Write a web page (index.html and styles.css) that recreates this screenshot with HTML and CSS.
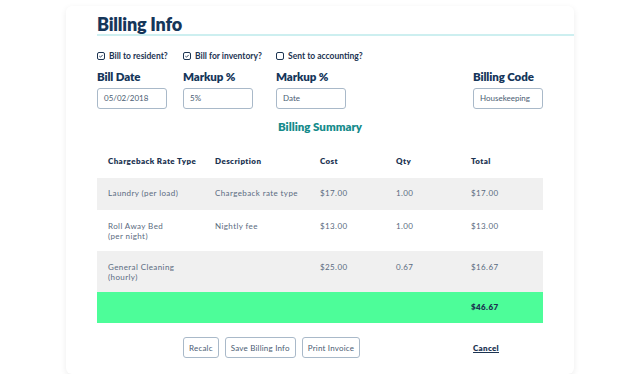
FILE: index.html
```html
<!DOCTYPE html>
<html lang="en">
<head>
    <meta charset="UTF-8">
    <title>Billing Info</title>
    <link rel="stylesheet" href="styles.css">
</head>
<body>
    <div class="card">
        <h1 class="title">Billing Info</h1>

        <div class="checks">
            <label class="check">
                <svg width="8" height="8" viewBox="0 0 8 8"><rect x="0.5" y="0.5" width="7" height="7" rx="1.5" fill="none" stroke="#1c3452"/><path d="M2.3 4.1 L3.5 5.2 L5.7 2.9" fill="none" stroke="#1c3452" stroke-width="0.9"/></svg>
                Bill to resident?
            </label>
            <label class="check">
                <svg width="8" height="8" viewBox="0 0 8 8"><rect x="0.5" y="0.5" width="7" height="7" rx="1.5" fill="none" stroke="#1c3452"/><path d="M2.3 4.1 L3.5 5.2 L5.7 2.9" fill="none" stroke="#1c3452" stroke-width="0.9"/></svg>
                Bill for inventory?
            </label>
            <label class="check">
                <svg width="8" height="8" viewBox="0 0 8 8"><rect x="0.5" y="0.5" width="7" height="7" rx="1.5" fill="none" stroke="#1c3452"/></svg>
                Sent to accounting?
            </label>
        </div>

        <div class="fields">
            <div class="field">
                <div class="field-label">Bill Date</div>
                <div class="input">05/02/2018</div>
            </div>
            <div class="field">
                <div class="field-label">Markup %</div>
                <div class="input">5%</div>
            </div>
            <div class="field">
                <div class="field-label">Markup %</div>
                <div class="input">Date</div>
            </div>
            <div class="field">
                <div class="field-label">Billing Code</div>
                <div class="input">Housekeeping</div>
            </div>
        </div>

        <h2 class="summary-title">Billing Summary</h2>

        <table class="summary">
            <colgroup>
                <col style="width:107px">
                <col style="width:105px">
                <col style="width:76px">
                <col style="width:75px">
                <col>
            </colgroup>
            <thead>
                <tr>
                    <th>Chargeback Rate Type</th>
                    <th>Description</th>
                    <th>Cost</th>
                    <th>Qty</th>
                    <th>Total</th>
                </tr>
            </thead>
            <tbody>
                <tr class="shade single">
                    <td>Laundry (per load)</td>
                    <td>Chargeback rate type</td>
                    <td>$17.00</td>
                    <td>1.00</td>
                    <td>$17.00</td>
                </tr>
                <tr>
                    <td>Roll Away Bed<br>(per night)</td>
                    <td>Nightly fee</td>
                    <td>$13.00</td>
                    <td>1.00</td>
                    <td>$13.00</td>
                </tr>
                <tr class="shade">
                    <td>General Cleaning<br>(hourly)</td>
                    <td></td>
                    <td>$25.00</td>
                    <td>0.67</td>
                    <td>$16.67</td>
                </tr>
                <tr class="grand">
                    <td></td>
                    <td></td>
                    <td></td>
                    <td></td>
                    <td>$46.67</td>
                </tr>
            </tbody>
        </table>

        <div class="actions">
            <button class="btn">Recalc</button>
            <button class="btn">Save Billing Info</button>
            <button class="btn">Print Invoice</button>
            <a href="#" class="cancel">Cancel</a>
        </div>
    </div>
</body>
</html>
```

FILE: styles.css
```css
body {
    margin: 0;
    background: #ffffff;
    font-family: Lato, "Noto Sans", sans-serif;
    color: #5a6b80;
}

.card {
    margin: 6px 0 0 66px;
    width: 508px;
    height: 368px;
    box-sizing: border-box;
    padding: 8px 31px 0 31px;
    background: #fff;
    border-radius: 6px;
    box-shadow: 0 2px 6px rgba(0,0,0,0.08);
}

.title {
    margin: 0 -31px 0 0;
    font-size: 18px;
    font-weight: 800;
    letter-spacing: -0.2px;
    color: #15365a;
    line-height: 20px;
    border-bottom: 2px solid #cdeff0;
}

.checks,
.fields {
    display: grid;
    grid-template-columns: 86px 93px 1fr 70px;
}

.checks {
    margin-top: 14px;
}

.check {
    display: flex;
    align-items: center;
    gap: 4px;
    font-size: 8.5px;
    font-weight: 700;
    color: #1c3452;
    line-height: 12px;
}

.fields {
    margin-top: 7px;
}

.field-label {
    font-size: 11.5px;
    font-weight: 800;
    letter-spacing: -0.1px;
    color: #15365a;
    line-height: 15px;
    white-space: nowrap;
}

.input {
    margin-top: 4px;
    width: 70px;
    height: 21px;
    box-sizing: border-box;
    border: 1px solid #a9b9c9;
    border-radius: 3px;
    padding: 0 6px;
    font-size: 8px;
    line-height: 19px;
    color: #4a5c72;
}

.summary-title {
    margin: 8px 0 0;
    text-align: center;
    font-size: 11.5px;
    font-weight: 800;
    color: #168b8b;
    line-height: 20px;
}

.summary {
    width: 446px;
    margin-top: 7px;
    border-collapse: collapse;
    table-layout: fixed;
    font-size: 8px;
    letter-spacing: 0.4px;
}

.summary th {
    text-align: left;
    font-weight: 800;
    color: #1c3452;
    padding: 0 0 0 11px;
    height: 34px;
    vertical-align: middle;
}

.summary td {
    padding: 12px 0 0 11px;
    height: 41px;
    box-sizing: border-box;
    vertical-align: top;
    line-height: 9.5px;
}

.summary tr.single td {
    height: 32px;
    padding-top: 0;
    vertical-align: middle;
}

.shade td {
    background: #f0f0f0;
}

.grand td {
    background: #4dfd99;
    height: 31px;
    padding-top: 0;
    vertical-align: middle;
    font-weight: 800;
    color: #1c3452;
}

.actions {
    display: flex;
    align-items: center;
    gap: 6px;
    margin-top: 14px;
    padding-left: 86px;
}

.btn {
    height: 21px;
    padding: 0 5px;
    background: #fff;
    border: 1px solid #a9b9c9;
    border-radius: 3px;
    font-family: inherit;
    font-size: 8px;
    letter-spacing: 0.2px;
    color: #4a5c72;
}

.cancel {
    margin-left: auto;
    margin-right: 44px;
    font-size: 8px;
    font-weight: 800;
    letter-spacing: 0.3px;
    color: #1c3452;
    text-decoration: underline;
}
```
